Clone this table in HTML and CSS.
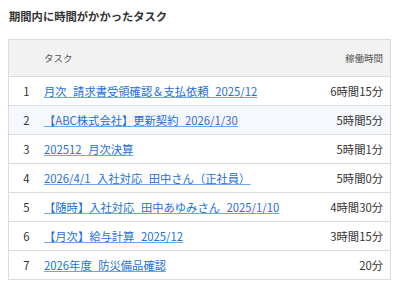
FILE: index.html
```html
<!DOCTYPE html>
<html lang="ja">
<head>
<meta charset="utf-8">
<link rel="stylesheet" href="styles.css">
</head>
<body>
<h2 class="title">期間内に時間がかかったタスク</h2>
<table class="tbl">
  <thead>
    <tr><th class="num"></th><th class="task">タスク</th><th class="time">稼働時間</th></tr>
  </thead>
  <tbody>
    <tr><td class="num">1</td><td class="task"><a href="#">月次 請求書受領確認＆支払依頼 2025/12</a></td><td class="time">6時間15分</td></tr>
    <tr class="hl"><td class="num">2</td><td class="task"><a href="#">【ABC株式会社】更新契約 2026/1/30</a></td><td class="time">5時間5分</td></tr>
    <tr><td class="num">3</td><td class="task"><a href="#">202512 月次決算</a></td><td class="time">5時間1分</td></tr>
    <tr><td class="num">4</td><td class="task"><a href="#">2026/4/1 入社対応 田中さん（正社員）</a></td><td class="time">5時間0分</td></tr>
    <tr><td class="num">5</td><td class="task"><a href="#">【随時】入社対応 田中あゆみさん 2025/1/10</a></td><td class="time">4時間30分</td></tr>
    <tr><td class="num">6</td><td class="task"><a href="#">【月次】給与計算 2025/12</a></td><td class="time">3時間15分</td></tr>
    <tr><td class="num">7</td><td class="task"><a href="#">2026年度 防災備品確認</a></td><td class="time">20分</td></tr>
  </tbody>
</table>
</body>
</html>
```
FILE: styles.css
```css
html, body { margin: 0; padding: 0; background: #fff; }
body {
  padding: 8px 10px 0 8px;
  font-family: "Noto Sans CJK JP", "Noto Sans", sans-serif;
  color: #333;
}
.title {
  margin: 0 0 15px 1px;
  font-size: 11.3px;
  font-weight: bold;
  line-height: 16px;
  color: #333;
}
.tbl {
  width: 383px;
  border-collapse: collapse;
  border: 1px solid #dcdcdc;
  font-size: 11.3px;
}
.tbl th {
  background: #f2f2f2;
  font-size: 9.5px;
  font-weight: normal;
  color: #555;
  height: 36px;
  border-bottom: 1px solid #dcdcdc;
  padding: 0;
}
.tbl td {
  height: 28px;
  padding: 0;
  border-bottom: 1px solid #dcdcdc;
  color: #333;
}
.tbl .num { width: 35px; text-align: center; }
.tbl .task { text-align: left; }
.tbl .time { text-align: right; padding-right: 7px; white-space: nowrap; }
.tbl tr.hl td { background: #f5f8fd; }
.tbl a {
  color: #1e6fd9;
  text-decoration: underline;
  text-decoration-color: #6aa6ef;
  word-spacing: 4px;
}
```
